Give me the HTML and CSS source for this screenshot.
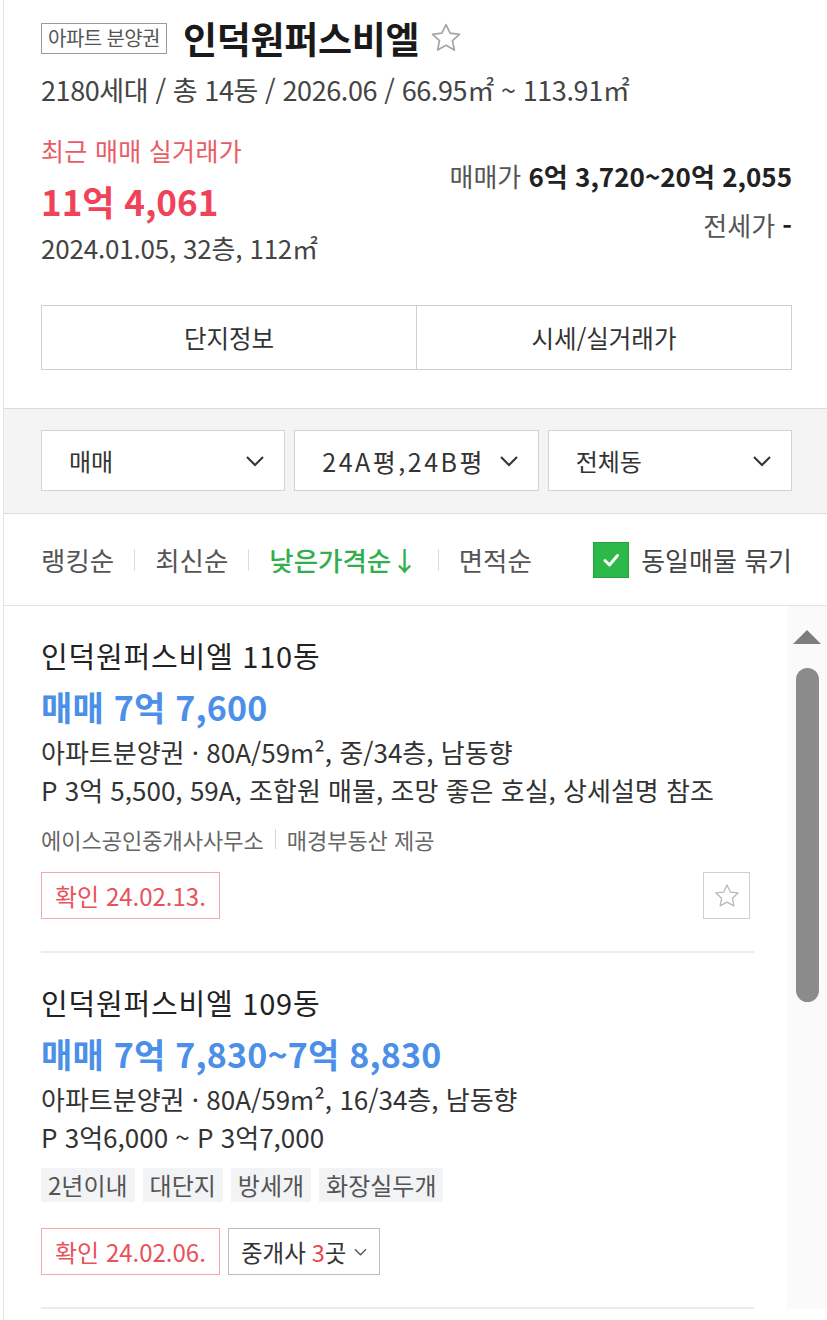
FILE: index.html
```html
<!DOCTYPE html>
<html lang="ko">
<head>
<meta charset="utf-8">
<title>인덕원퍼스비엘</title>
<link rel="stylesheet" href="styles.css">
</head>
<body>
<div class="page">
  <header class="head">
    <div class="title-row">
      <span class="badge">아파트 분양권</span>
      <h1 class="title">인덕원퍼스비엘</h1>
      <svg class="star-big" viewBox="0 0 24 24"><polygon points="12,2.5 14.9,8.6 21.5,9.4 16.6,13.9 17.9,20.5 12,17.2 6.1,20.5 7.4,13.9 2.5,9.4 9.1,8.6"/></svg>
    </div>
    <p class="summary">2180세대 / 총 14동 / 2026.06 / 66.95㎡ ~ 113.91㎡</p>
    <div class="price-row">
      <div class="recent">
        <p class="recent-label">최근 매매 실거래가</p>
        <p class="recent-price">11억 4,061</p>
        <p class="recent-meta">2024.01.05, 32층, 112㎡</p>
      </div>
      <div class="ranges">
        <p class="range">매매가 <strong>6억 3,720~20억 2,055</strong></p>
        <p class="range">전세가 <strong>-</strong></p>
      </div>
    </div>
    <div class="tabs">
      <div class="tab">단지정보</div>
      <div class="tab">시세/실거래가</div>
    </div>
  </header>

  <section class="filters">
    <div class="select"><span>매매</span><svg class="chev" viewBox="0 0 20 12"><polyline points="2,2 10,10 18,2"/></svg></div>
    <div class="select"><span class="select-size">24A평,24B평</span><svg class="chev" viewBox="0 0 20 12"><polyline points="2,2 10,10 18,2"/></svg></div>
    <div class="select"><span>전체동</span><svg class="chev" viewBox="0 0 20 12"><polyline points="2,2 10,10 18,2"/></svg></div>
  </section>

  <nav class="sort">
    <ul class="sort-list">
      <li>랭킹순</li>
      <li class="sort-sep"></li>
      <li>최신순</li>
      <li class="sort-sep"></li>
      <li class="sort-on">낮은가격순↓</li>
      <li class="sort-sep"></li>
      <li>면적순</li>
    </ul>
    <div class="same">
      <span class="check"><svg viewBox="0 0 24 24"><polyline points="6,12.5 10.5,17 18.5,7.5"/></svg></span>
      <span>동일매물 묶기</span>
    </div>
  </nav>

  <div class="list-wrap">
    <div class="list">
      <article class="item">
        <h2 class="item-title">인덕원퍼스비엘 110동</h2>
        <p class="item-price">매매 7억 7,600</p>
        <p class="item-spec">아파트분양권 · 80A/59m², 중/34층, 남동향</p>
        <p class="item-desc">P 3억 5,500, 59A, 조합원 매물, 조망 좋은 호실, 상세설명 참조</p>
        <p class="item-agent">에이스공인중개사사무소<span class="agent-sep"></span>매경부동산 제공</p>
        <div class="actions actions-first">
          <span class="confirm">확인 24.02.13.</span>
          <span class="fav"><svg viewBox="0 0 24 24"><polygon points="12,2.5 14.9,8.6 21.5,9.4 16.6,13.9 17.9,20.5 12,17.2 6.1,20.5 7.4,13.9 2.5,9.4 9.1,8.6"/></svg></span>
        </div>
      </article>
      <article class="item">
        <h2 class="item-title">인덕원퍼스비엘 109동</h2>
        <p class="item-price">매매 7억 7,830~7억 8,830</p>
        <p class="item-spec">아파트분양권 · 80A/59m², 16/34층, 남동향</p>
        <p class="item-desc">P 3억6,000 ~ P 3억7,000</p>
        <div class="tags">
          <span class="tag">2년이내</span>
          <span class="tag">대단지</span>
          <span class="tag">방세개</span>
          <span class="tag">화장실두개</span>
        </div>
        <div class="actions actions-tags">
          <span class="confirm">확인 24.02.06.</span>
          <span class="brokers">중개사 <em>3</em>곳<svg class="chev-sm" viewBox="0 0 14 8"><polyline points="1,1 7,7 13,1"/></svg></span>
        </div>
      </article>
    </div>
    <div class="scrollbar">
      <span class="arrow"></span>
      <span class="thumb"></span>
    </div>
  </div>
</div>
</body>
</html>
```

FILE: styles.css
```css
* {
  box-sizing: border-box;
  margin: 0;
  padding: 0;
}

body {
  margin: 0;
  font-family: "Noto Sans CJK KR", "Noto Sans CJK SC", sans-serif;
  color: #222;
  background: #fff;
}

.page {
  margin-left: 3px;
  border-left: 1px solid #e3e3e3;
  width: 824px;
  min-height: 1320px;
}

/* header */
.head {
  padding: 18px 35px 38px 37px;
}

.title-row {
  display: flex;
  align-items: center;
  height: 40px;
}

.badge {
  display: inline-flex;
  align-items: center;
  justify-content: center;
  width: 126px;
  height: 31px;
  border: 1px solid #9b9b9b;
  font-size: 20px;
  line-height: 1;
  color: #555;
  letter-spacing: -0.6px;
}

.title {
  margin-left: 16px;
  font-size: 37px;
  font-weight: 700;
  line-height: 40px;
  color: #1a1a1a;
  letter-spacing: -0.3px;
}

.star-big {
  width: 34px;
  height: 34px;
  margin-left: 10px;
  fill: none;
  stroke: #a5a5a5;
  stroke-width: 1.2;
  stroke-linejoin: round;
}

.summary {
  margin-top: 17px;
  font-size: 27px;
  line-height: 30px;
  color: #444;
  letter-spacing: -0.4px;
}

.price-row {
  display: flex;
  justify-content: space-between;
  margin-top: 30px;
}

.recent-label {
  font-size: 25px;
  line-height: 30px;
  color: #ea5b63;
  letter-spacing: 0.3px;
}

.recent-price {
  margin-top: 14px;
  font-size: 35px;
  line-height: 44px;
  font-weight: 700;
  color: #f0435a;
}

.recent-meta {
  margin-top: 10px;
  font-size: 26px;
  line-height: 30px;
  color: #444;
  letter-spacing: -0.2px;
}

.ranges {
  padding-top: 26px;
  text-align: right;
}

.range {
  font-size: 26px;
  line-height: 30px;
  color: #555;
  letter-spacing: 0;
}

.range + .range {
  margin-top: 19px;
}

.range strong {
  color: #222;
  font-weight: 700;
}

.tabs {
  display: flex;
  margin-top: 42px;
  height: 65px;
  border: 1px solid #cfcfcf;
}

.tab {
  flex: 1;
  display: flex;
  align-items: center;
  justify-content: center;
  font-size: 24.5px;
  color: #333;
  background: #fff;
}

.tab + .tab {
  border-left: 1px solid #cfcfcf;
}

/* filters */
.filters {
  display: grid;
  grid-template-columns: repeat(3, 1fr);
  gap: 9px;
  padding: 21px 35px 22px 37px;
  background: #f4f4f4;
  border-top: 1px solid #dcdcdc;
  border-bottom: 1px solid #dcdcdc;
}

.select {
  display: flex;
  align-items: center;
  justify-content: space-between;
  height: 61px;
  padding: 0 19px 0 27px;
  background: #fff;
  border: 1px solid #d3d3d3;
  font-size: 24px;
  color: #333;
}

.select-size {
  font-size: 25px;
  letter-spacing: 2.5px;
}

.chev {
  width: 20px;
  height: 12px;
  fill: none;
  stroke: #333;
  stroke-width: 2;
}

/* sort */
.sort {
  display: flex;
  align-items: center;
  justify-content: space-between;
  height: 92px;
  padding: 0 35px 0 37px;
  border-bottom: 1px solid #e3e3e3;
}

.sort-list {
  display: flex;
  align-items: center;
  list-style: none;
  font-size: 26.5px;
  color: #555;
}

.sort-sep {
  width: 1px;
  height: 22px;
  background: #dcdcdc;
  margin: 0 20px;
}

.sort-on {
  color: #34ad4c;
  font-weight: 500;
}

.same {
  display: flex;
  align-items: center;
  font-size: 26px;
  color: #444;
}

.check {
  display: flex;
  align-items: center;
  justify-content: center;
  width: 36px;
  height: 36px;
  margin-right: 12px;
  background: #2db84a;
  border: 1px solid #26a03f;
}

.check svg {
  width: 24px;
  height: 24px;
  fill: none;
  stroke: #fff;
  stroke-width: 3;
  stroke-linecap: round;
  stroke-linejoin: round;
}

/* list */
.list-wrap {
  display: flex;
}

.list {
  flex: 1;
  padding-left: 37px;
  margin-right: 33px;
}

.item {
  padding: 32px 0 32px;
  border-bottom: 2px solid #ececec;
}

.item-title {
  font-size: 29px;
  font-weight: 400;
  line-height: 34px;
  color: #222;
  letter-spacing: 0.8px;
}

.item-price {
  margin-top: 16px;
  font-size: 34px;
  line-height: 38px;
  font-weight: 700;
  color: #4b8fe8;
  letter-spacing: 0.2px;
}

.item-spec {
  margin-top: 10px;
  font-size: 26px;
  line-height: 32px;
  color: #333;
}

.item-desc {
  margin-top: 6px;
  font-size: 26px;
  line-height: 32px;
  color: #333;
}

.item-agent {
  display: flex;
  align-items: center;
  margin-top: 20px;
  font-size: 22px;
  line-height: 26px;
  color: #666;
}

.agent-sep {
  width: 1px;
  height: 20px;
  margin: 0 11px;
  background: #d5d5d5;
}

.tags {
  display: flex;
  gap: 8px;
  margin-top: 15px;
}

.tag {
  height: 34px;
  padding: 0 7px;
  line-height: 34px;
  font-size: 24px;
  color: #555;
  background: #f1f3f5;
}

.actions {
  display: flex;
  align-items: center;
}

.actions-first {
  margin-top: 20px;
}

.actions-tags {
  margin-top: 26px;
}

.confirm {
  display: flex;
  align-items: center;
  height: 47px;
  padding: 0 13px;
  border: 1px solid #f3a9a9;
  font-size: 24px;
  color: #e8525a;
}

.brokers {
  display: flex;
  align-items: center;
  height: 47px;
  margin-left: 8px;
  padding: 0 12px;
  border: 1px solid #bdbdbd;
  font-size: 23.5px;
  color: #333;
}

.brokers em {
  font-style: normal;
  color: #e8454d;
  margin-left: 6px;
}

.chev-sm {
  width: 13px;
  height: 8px;
  margin-left: 8px;
  fill: none;
  stroke: #555;
  stroke-width: 1.4;
}

.fav {
  display: flex;
  align-items: center;
  justify-content: center;
  width: 47px;
  height: 47px;
  margin-left: auto;
  margin-right: 4px;
  border: 1px solid #cfcfcf;
}

.fav svg {
  width: 28px;
  height: 28px;
  fill: none;
  stroke: #b8b8b8;
  stroke-width: 1.1;
  stroke-linejoin: round;
}

/* scrollbar */
.scrollbar {
  display: flex;
  flex-direction: column;
  align-items: center;
  width: 40px;
  padding-top: 24px;
  background: #fafafa;
}

.arrow {
  width: 0;
  height: 0;
  border-left: 14px solid transparent;
  border-right: 14px solid transparent;
  border-bottom: 14px solid #7d7d7d;
}

.thumb {
  width: 23px;
  height: 334px;
  margin-top: 24px;
  border-radius: 12px;
  background: #8b8b8b;
}
```
